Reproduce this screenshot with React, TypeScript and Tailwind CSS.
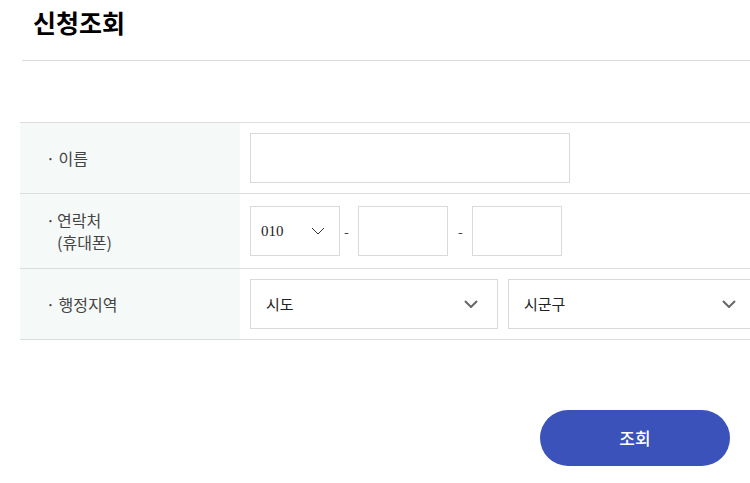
import { ReactNode } from 'react';

const font = { fontFamily: '"Noto Sans CJK KR", "Noto Sans", sans-serif' };

function Chevron({ thin }: { thin?: boolean }) {
  if (thin) {
    return (
      <svg width="14" height="8" viewBox="0 0 14 8" fill="none">
        <path d="M1 1l6 6 6-6" stroke="#333" strokeWidth="1" />
      </svg>
    );
  }
  return (
    <svg width="14" height="8" viewBox="0 0 14 8" fill="none">
      <path d="M1 1l6 6 6-6" stroke="#666" strokeWidth="2" />
    </svg>
  );
}

function Row({ label, height, children }: { label: ReactNode; height: string; children: ReactNode }) {
  return (
    <div className={`flex border-b border-[#dddddd] ${height}`}>
      <div className="flex w-[220px] shrink-0 items-center bg-[#f5f9f8] pl-[26px] text-[16px] leading-[22px] text-[#444444]">
        {label}
      </div>
      <div className="flex flex-1 items-center pl-[10px]">{children}</div>
    </div>
  );
}

export default function App() {
  return (
    <div className="h-[483px] w-[750px] overflow-hidden bg-white" style={font}>
      <div className="ml-[22px] h-[61px] border-b border-[#d9d9d9] pl-[11px] pt-[5px]">
        <h2 className="text-[25px] font-bold leading-[34px] text-black">신청조회</h2>
      </div>

      <div className="ml-[20px] mt-[61px] w-[760px] border-t border-[#dddddd]">
        <Row label={<span>· 이름</span>} height="h-[71px]">
          <input className="h-[50px] w-[320px] border border-[#d9d9d9] outline-none" />
        </Row>

        <Row
          height="h-[75px]"
          label={
            <div className="flex">
              <span className="w-[11px]">·</span>
              <div className="flex flex-col">
                <span>연락처</span>
                <span>(휴대폰)</span>
              </div>
            </div>
          }
        >
          <div className="flex items-center">
            <div className="flex h-[50px] w-[90px] items-center justify-between border border-[#d9d9d9] pl-[10px] pr-[14px]">
              <span className="text-[15px] text-[#222]" style={{ fontFamily: '"Liberation Serif", serif' }}>
                010
              </span>
              <Chevron thin />
            </div>
            <span className="w-[18px] pl-[4px] text-[14px] text-[#444]">-</span>
            <input className="h-[50px] w-[90px] border border-[#d9d9d9] outline-none" />
            <span className="w-[24px] pl-[10px] text-[14px] text-[#444]">-</span>
            <input className="h-[50px] w-[90px] border border-[#d9d9d9] outline-none" />
          </div>
        </Row>

        <Row label={<span>· 행정지역</span>} height="h-[71px]">
          <div className="flex gap-[10px]">
            <div className="flex h-[50px] w-[248px] items-center justify-between border border-[#d9d9d9] pl-[15px] pr-[19px] text-[15px] text-[#222]">
              <span>시도</span>
              <Chevron />
            </div>
            <div className="flex h-[50px] w-[248px] items-center justify-between border border-[#d9d9d9] pl-[15px] pr-[19px] text-[15px] text-[#222]">
              <span>시군구</span>
              <Chevron />
            </div>
          </div>
        </Row>
      </div>

      <div className="mt-[70px] flex justify-end pr-[20px]">
        <button className="h-[56px] w-[190px] rounded-full bg-[#3a52b9] text-[17px] font-medium text-white">
          조회
        </button>
      </div>
    </div>
  );
}
